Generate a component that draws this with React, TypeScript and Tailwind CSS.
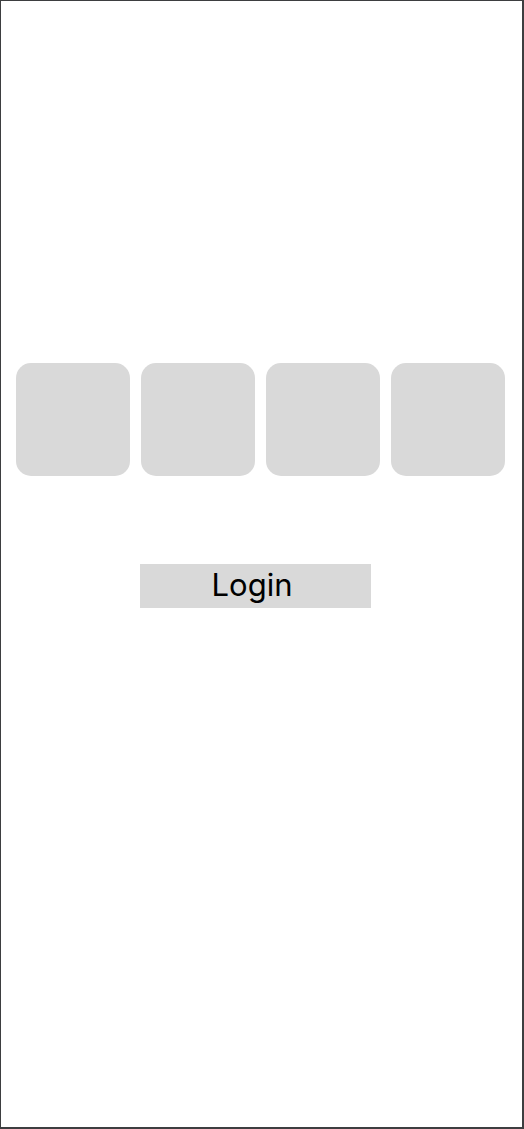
export default function App() {
  return (
    <div className="w-[524px] h-[1129px] bg-white border-t border-l border-r-2 border-b-2 border-[#3d3e40] flex flex-col items-start font-['Inter',sans-serif]">
      {/* code boxes */}
      <div className="mt-[362px] ml-[15px] flex gap-[11px]">
        <div className="w-[114px] h-[113px] rounded-[15px] bg-[#d9d9d9]"></div>
        <div className="w-[114px] h-[113px] rounded-[15px] bg-[#d9d9d9]"></div>
        <div className="w-[114px] h-[113px] rounded-[15px] bg-[#d9d9d9]"></div>
        <div className="w-[114px] h-[113px] rounded-[15px] bg-[#d9d9d9]"></div>
      </div>

      {/* login */}
      <button className="mt-[88px] ml-[139px] w-[231px] h-[44px] bg-[#d9d9d9] text-black text-[31px] leading-[40px] flex items-center justify-center pr-[7px] pb-[3px]">
        Login
      </button>
    </div>
  );
}
